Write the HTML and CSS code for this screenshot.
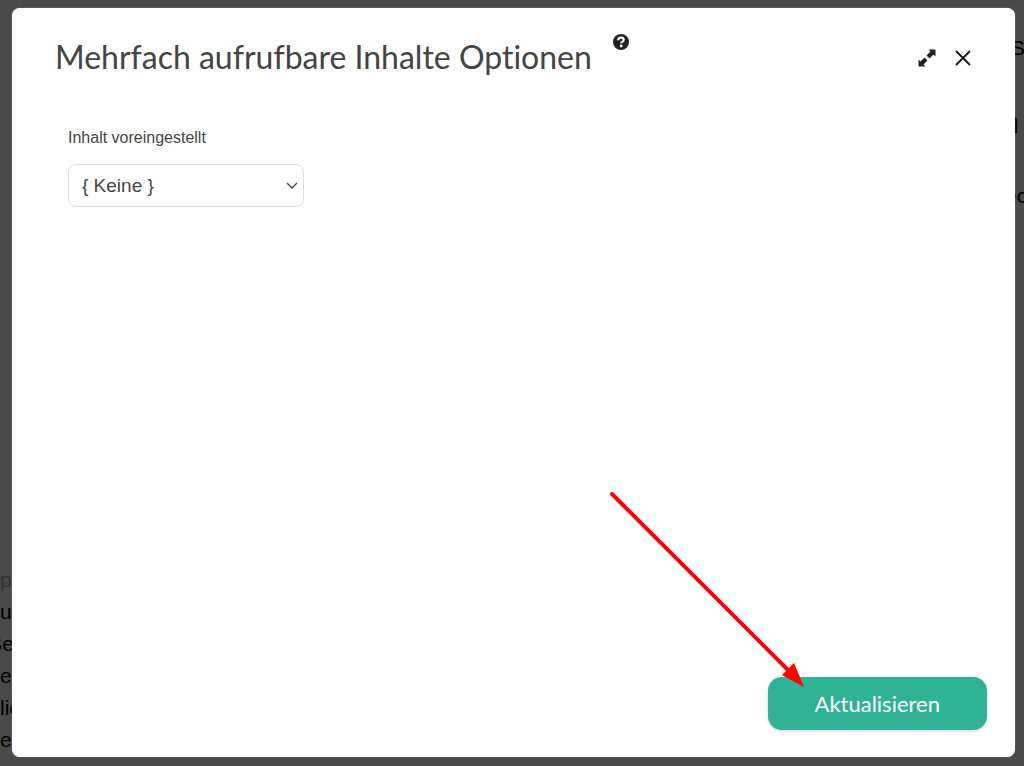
FILE: index.html
```
<!DOCTYPE html>
<html lang="de">
<head>
    <meta charset="UTF-8">
    <meta name="viewport" content="width=device-width, initial-scale=1.0">
    <title>Mehrfach aufrufbare Inhalte Optionen</title>
    <link rel="stylesheet" href="styles.css">
</head>
<body>
    <!-- Page behind the dialog -->
    <div class="page page-left" aria-hidden="true">
        <p class="muted">p</p>
        <p>u</p>
        <p class="end">Be</p>
        <p>e</p>
        <p>lic</p>
        <p>e</p>
    </div>
    <div class="page page-right" aria-hidden="true">
        <p class="inset">So</p>
        <p class="large">n</p>
        <p>ec</p>
    </div>

    <div class="modal" role="dialog" aria-labelledby="modalTitle">
        <header class="modal-header">
            <h1 id="modalTitle">Mehrfach aufrufbare Inhalte Optionen</h1>
            <button type="button" class="icon-button" aria-label="Hilfe">
                <svg width="18" height="18" viewBox="0 0 18 18">
                    <circle cx="9" cy="9" r="8" fill="#222"/>
                    <path d="M6.2 7.2C6.3 5.5 7.5 4.7 9 4.7c1.6 0 2.7.8 2.7 2.1 0 1.8-2.4 1.8-2.5 3.5" fill="none" stroke="#fff" stroke-width="2.2"/>
                    <circle cx="9.2" cy="13" r="1.4" fill="#fff"/>
                </svg>
            </button>
            <div class="modal-actions">
                <button type="button" class="icon-button" aria-label="Vergrößern">
                    <svg width="18" height="18" viewBox="0 0 18 18">
                        <path d="M10.5 .5H17a.5.5 0 0 1 .5.5v6.5L15.5 5.5 11.5 9.5 8.5 6.5l4-4zM7.5 17.5H1a.5.5 0 0 1-.5-.5v-6.5l2 2 4-4 3 3-4 4z" fill="#222"/>
                        <path d="M6 6l6 6" stroke="#fff" stroke-width="2"/>
                    </svg>
                </button>
                <button type="button" class="icon-button" aria-label="Schließen">
                    <svg width="18" height="18" viewBox="0 0 18 18">
                        <path d="M2 2l14 14M16 2L2 16" fill="none" stroke="#111" stroke-width="1.8"/>
                    </svg>
                </button>
            </div>
        </header>

        <form class="modal-body">
            <label for="preset">Inhalt voreingestellt</label>
            <div class="select-wrap">
                <select id="preset">
                    <option value="" selected>{ Keine }</option>
                </select>
                <svg class="chevron" width="12" height="8" viewBox="0 0 12 8">
                    <path d="M1 1l5 5 5-5" fill="none" stroke="#444" stroke-width="1.4"/>
                </svg>
            </div>
        </form>

        <footer class="modal-footer">
            <button type="button" class="submit">Aktualisieren</button>
        </footer>

        <!-- Pointer to the submit button -->
        <svg class="arrow" width="196" height="198" viewBox="0 0 196 198" aria-hidden="true">
            <path d="M3 4L182 183" stroke="#f00" stroke-width="4" stroke-linecap="round"/>
            <path d="M195 197L173 185 185 173z" fill="#f00"/>
        </svg>
    </div>
</body>
</html>
```
FILE: styles.css
```
* {
    margin: 0;
    padding: 0;
    box-sizing: border-box;
}

body {
    font-family: "Liberation Sans", Arial, sans-serif;
    background: #4a4a4a;
    color: #444;
    display: flex;
    min-height: 100vh;
    padding: 8px 9px 9px 12px;
    overflow: hidden;
}

/* Page behind the dialog */
.page {
    position: absolute;
    overflow: hidden;
    color: #000;
    font-size: 21px;
    line-height: 32px;
}

.page p {
    display: flex;
}

.page .end {
    justify-content: flex-end;
}

.page .muted {
    color: #333;
}

.page-left {
    left: 0;
    bottom: 10px;
    width: 14px;
}

.page-right {
    top: 32px;
    right: 0;
    width: 19px;
}

.page-right .inset {
    padding-left: 6px;
}

.page-right .large {
    justify-content: flex-end;
    padding: 26px 5px;
    font-size: 32px;
    line-height: 64px;
}

/* Dialog */
.modal {
    position: relative;
    flex: 1;
    display: flex;
    flex-direction: column;
    background: #fff;
    border-radius: 8px;
    box-shadow: 0 0 1px #ccc;
}

.modal-header {
    display: flex;
    align-items: flex-start;
    gap: 20px;
    padding: 25px 43px 0;
}

h1 {
    font-family: Lato, sans-serif;
    font-size: 32px;
    font-weight: 400;
    font-variant-ligatures: none;
    line-height: 48px;
}

.icon-button {
    display: flex;
    border: none;
    background: none;
    cursor: pointer;
}

.modal-actions {
    display: flex;
    gap: 18px;
    margin-left: auto;
    padding-top: 16px;
}

.modal-body {
    flex: 1;
    padding: 47px 56px;
}

label {
    display: block;
    margin-bottom: 16px;
    font-size: 16px;
    line-height: 20px;
}

.select-wrap {
    position: relative;
    width: 236px;
}

select {
    appearance: none;
    width: 100%;
    height: 43px;
    padding: 0 13px;
    border: 1px solid #ddd;
    border-radius: 8px;
    background: #fff;
    color: #444;
    font-family: inherit;
    font-size: 19px;
}

.chevron {
    position: absolute;
    top: 18px;
    right: 6px;
    pointer-events: none;
}

.modal-footer {
    display: flex;
    justify-content: flex-end;
    padding: 0 28px 27px;
}

.submit {
    padding: 12px 47px;
    border: none;
    border-radius: 14px;
    background: #2fb394;
    box-shadow: 0 1px 3px rgba(0, 0, 0, 0.2);
    color: #fff;
    font-family: Lato, sans-serif;
    font-size: 22px;
    line-height: 29px;
    cursor: pointer;
}

.arrow {
    position: absolute;
    right: 210px;
    bottom: 69px;
    pointer-events: none;
}
```
